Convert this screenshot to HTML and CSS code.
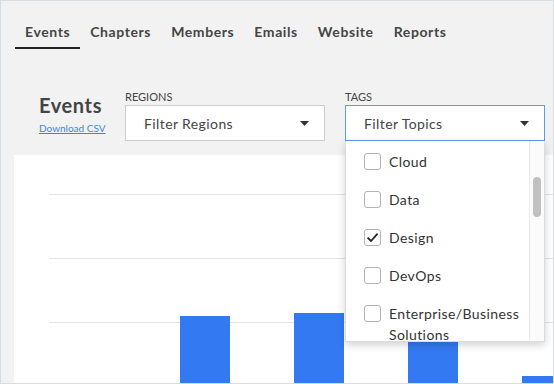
FILE: index.html
```html
<!DOCTYPE html>
<html>
<head>
<meta charset="utf-8">
<link rel="stylesheet" href="styles.css">
</head>
<body>
<div class="frame">
  <nav class="tabs">
    <a class="tab active">Events</a>
    <a class="tab">Chapters</a>
    <a class="tab">Members</a>
    <a class="tab">Emails</a>
    <a class="tab">Website</a>
    <a class="tab">Reports</a>
  </nav>
  <div class="toolbar">
    <div class="title-col">
      <h1 class="title">Events</h1>
      <a class="csv">Download CSV</a>
    </div>
    <div class="field">
      <div class="label">REGIONS</div>
      <div class="select">
        <span>Filter Regions</span>
        <svg class="caret" width="9" height="5" viewBox="0 0 9 5"><polygon points="0,0 9,0 4.5,5" fill="#333"/></svg>
      </div>
    </div>
    <div class="field">
      <div class="label">TAGS</div>
      <div class="select open">
        <span>Filter Topics</span>
        <svg class="caret" width="9" height="5" viewBox="0 0 9 5"><polygon points="0,0 9,0 4.5,5" fill="#333"/></svg>
      </div>
      <div class="menu">
        <ul class="options">
          <li class="option"><span class="box"></span><span>Cloud</span></li>
          <li class="option"><span class="box"></span><span>Data</span></li>
          <li class="option"><span class="box"><svg width="15" height="15" viewBox="0 0 15 15"><path d="M2.6 7.6 L6 11 L12.6 3.6" fill="none" stroke="#222" stroke-width="1.8"/></svg></span><span>Design</span></li>
          <li class="option"><span class="box"></span><span>DevOps</span></li>
          <li class="option"><span class="box"></span><span>Enterprise/Business Solutions</span></li>
        </ul>
        <div class="track"><div class="thumb"></div></div>
      </div>
    </div>
  </div>
  <div class="card">
    <div class="plot">
      <div class="bar" style="height:67px"></div>
      <div class="bar" style="height:70px"></div>
      <div class="bar" style="height:130px"></div>
      <div class="bar" style="height:7px"></div>
    </div>
  </div>
</div>
</body>
</html>
```
FILE: styles.css
```css
html, body {
  margin: 0;
  padding: 0;
}
body {
  font-family: Lato, "Liberation Sans", sans-serif;
  color: #444;
}
.frame {
  width: 554px;
  height: 384px;
  box-sizing: border-box;
  border: 1px solid #d4dee6;
  background: #f2f2f2;
  display: flex;
  flex-direction: column;
  overflow: hidden;
}
.tabs {
  display: flex;
  padding: 21px 0 0 14px;
}
.tab {
  flex: none;
  padding: 0 10px 5px;
  line-height: 20px;
  font-size: 14px;
  font-weight: 700;
  letter-spacing: 0.6px;
  color: #454545;
  border-bottom: 2px solid transparent;
}
.tab.active {
  border-bottom-color: #222;
}
.toolbar {
  display: flex;
  padding: 41px 0 0 38px;
}
.title-col {
  flex: none;
  width: 86px;
  padding-top: 3px;
  display: flex;
  flex-direction: column;
}
.title {
  margin: 0;
  font-size: 20px;
  line-height: 24px;
  font-weight: 700;
  letter-spacing: 0.6px;
  color: #444;
}
.csv {
  margin-top: 5px;
  font-size: 10px;
  line-height: 12px;
  color: #3a86e6;
  text-decoration: underline;
}
.field {
  flex: none;
  position: relative;
  width: 200px;
  margin-right: 20px;
}
.label {
  font-size: 11px;
  line-height: 13px;
  color: #444;
  margin-bottom: 2px;
}
.select {
  height: 36px;
  box-sizing: border-box;
  border: 1px solid #cccccc;
  background: #fff;
  display: flex;
  align-items: center;
  justify-content: space-between;
  padding: 0 15px 0 18px;
  font-size: 14px;
  line-height: 17px;
  letter-spacing: 0.4px;
  color: #444;
}
.select.open {
  border-color: #5a9de8;
}
.menu {
  position: absolute;
  top: 100%;
  left: 0;
  width: 200px;
  height: 201px;
  box-sizing: border-box;
  background: #fff;
  border: 1px solid #dcdcdc;
  border-top: none;
  box-shadow: 0 3px 8px rgba(0, 0, 0, 0.18);
  display: flex;
  z-index: 2;
  overflow: hidden;
}
.options {
  list-style: none;
  margin: 0;
  padding: 1px 0 0;
  flex: 1;
}
.option {
  display: flex;
  align-items: flex-start;
  gap: 8px;
  padding: 9px 6px 8px 18px;
  font-size: 14px;
  line-height: 21px;
  letter-spacing: 0.4px;
  color: #333;
}
.box {
  flex: none;
  width: 17px;
  height: 17px;
  box-sizing: border-box;
  margin-top: 2px;
  border: 1px solid #b3b3b3;
  border-radius: 3px;
  background: #fff;
  display: flex;
  align-items: center;
  justify-content: center;
}
.track {
  width: 15px;
  box-sizing: border-box;
  border-left: 1px solid #ebebeb;
  background: #fbfbfb;
  padding-top: 36px;
  display: flex;
  justify-content: center;
}
.thumb {
  width: 8px;
  height: 40px;
  border-radius: 4px;
  background: #c1c1c1;
}
.card {
  flex: 1;
  margin: 14px 0 0 13px;
  background: #fff;
  display: flex;
  flex-direction: column;
}
.plot {
  flex: 1;
  margin: 39px 0 0 35px;
  background: repeating-linear-gradient(to bottom, #e3e3e3 0, #e3e3e3 1px, transparent 1px, transparent 64px);
  display: flex;
  align-items: flex-end;
  padding-left: 131px;
  gap: 64px;
}
.bar {
  width: 50px;
  flex: none;
  background: #3379f1;
}
```
